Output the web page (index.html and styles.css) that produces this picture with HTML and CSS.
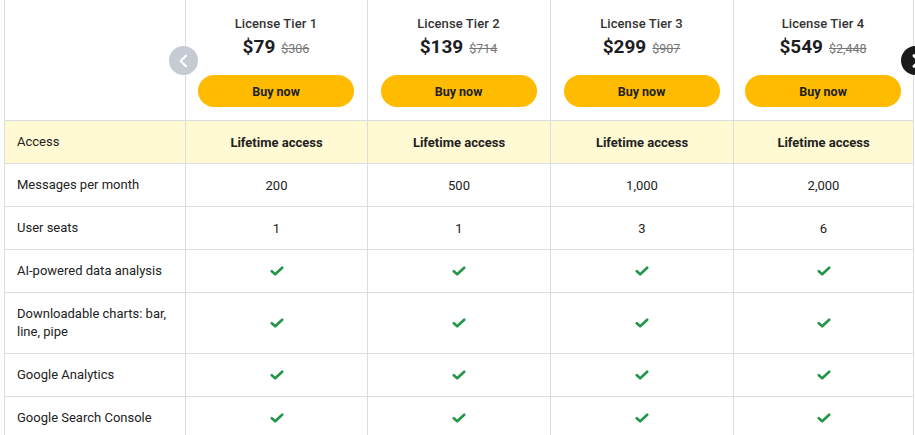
FILE: index.html
```html
<!DOCTYPE html>
<html>
<head>
<meta charset="utf-8">
<link rel="stylesheet" href="styles.css">
</head>
<body>
<div class="wrap">
  <div class="grid">
    <div class="cell head blank"></div>
    <div class="cell head">
      <div class="tier">License Tier 1</div>
      <div class="price"><span class="now">$79</span><span class="old">$306</span></div>
      <button class="buy">Buy now</button>
    </div>
    <div class="cell head">
      <div class="tier">License Tier 2</div>
      <div class="price"><span class="now">$139</span><span class="old">$714</span></div>
      <button class="buy">Buy now</button>
    </div>
    <div class="cell head">
      <div class="tier">License Tier 3</div>
      <div class="price"><span class="now">$299</span><span class="old">$907</span></div>
      <button class="buy">Buy now</button>
    </div>
    <div class="cell head">
      <div class="tier">License Tier 4</div>
      <div class="price"><span class="now">$549</span><span class="old">$2,448</span></div>
      <button class="buy">Buy now</button>
    </div>

    <div class="cell label hl">Access</div>
    <div class="cell val hl strong">Lifetime access</div>
    <div class="cell val hl strong">Lifetime access</div>
    <div class="cell val hl strong">Lifetime access</div>
    <div class="cell val hl strong">Lifetime access</div>

    <div class="cell label">Messages per month</div>
    <div class="cell val">200</div>
    <div class="cell val">500</div>
    <div class="cell val">1,000</div>
    <div class="cell val">2,000</div>

    <div class="cell label">User seats</div>
    <div class="cell val">1</div>
    <div class="cell val">1</div>
    <div class="cell val">3</div>
    <div class="cell val">6</div>

    <div class="cell label">AI-powered data analysis</div>
    <div class="cell val"><svg class="chk" viewBox="0 0 14 10"><path d="M1.8 5.2 L5.2 8.3 L12.2 1.7" /></svg></div>
    <div class="cell val"><svg class="chk" viewBox="0 0 14 10"><path d="M1.8 5.2 L5.2 8.3 L12.2 1.7" /></svg></div>
    <div class="cell val"><svg class="chk" viewBox="0 0 14 10"><path d="M1.8 5.2 L5.2 8.3 L12.2 1.7" /></svg></div>
    <div class="cell val"><svg class="chk" viewBox="0 0 14 10"><path d="M1.8 5.2 L5.2 8.3 L12.2 1.7" /></svg></div>

    <div class="cell label tall">Downloadable charts: bar, line, pipe</div>
    <div class="cell val tall"><svg class="chk" viewBox="0 0 14 10"><path d="M1.8 5.2 L5.2 8.3 L12.2 1.7" /></svg></div>
    <div class="cell val tall"><svg class="chk" viewBox="0 0 14 10"><path d="M1.8 5.2 L5.2 8.3 L12.2 1.7" /></svg></div>
    <div class="cell val tall"><svg class="chk" viewBox="0 0 14 10"><path d="M1.8 5.2 L5.2 8.3 L12.2 1.7" /></svg></div>
    <div class="cell val tall"><svg class="chk" viewBox="0 0 14 10"><path d="M1.8 5.2 L5.2 8.3 L12.2 1.7" /></svg></div>

    <div class="cell label">Google Analytics</div>
    <div class="cell val"><svg class="chk" viewBox="0 0 14 10"><path d="M1.8 5.2 L5.2 8.3 L12.2 1.7" /></svg></div>
    <div class="cell val"><svg class="chk" viewBox="0 0 14 10"><path d="M1.8 5.2 L5.2 8.3 L12.2 1.7" /></svg></div>
    <div class="cell val"><svg class="chk" viewBox="0 0 14 10"><path d="M1.8 5.2 L5.2 8.3 L12.2 1.7" /></svg></div>
    <div class="cell val"><svg class="chk" viewBox="0 0 14 10"><path d="M1.8 5.2 L5.2 8.3 L12.2 1.7" /></svg></div>

    <div class="cell label">Google Search Console</div>
    <div class="cell val"><svg class="chk" viewBox="0 0 14 10"><path d="M1.8 5.2 L5.2 8.3 L12.2 1.7" /></svg></div>
    <div class="cell val"><svg class="chk" viewBox="0 0 14 10"><path d="M1.8 5.2 L5.2 8.3 L12.2 1.7" /></svg></div>
    <div class="cell val"><svg class="chk" viewBox="0 0 14 10"><path d="M1.8 5.2 L5.2 8.3 L12.2 1.7" /></svg></div>
    <div class="cell val"><svg class="chk" viewBox="0 0 14 10"><path d="M1.8 5.2 L5.2 8.3 L12.2 1.7" /></svg></div>
  </div>
  <button class="nav prev" aria-label="Previous"><svg viewBox="0 0 12 12"><path d="M7.5 2 L3.5 6 L7.5 10" /></svg></button>
  <button class="nav next" aria-label="Next"><svg viewBox="0 0 12 12"><path d="M4.5 2 L8.5 6 L4.5 10" /></svg></button>
</div>
</body>
</html>
```

FILE: styles.css
```css
html, body {
  margin: 0;
  padding: 0;
  background: #fff;
  overflow: hidden;
}
body {
  font-family: Roboto, "Liberation Sans", Arial, sans-serif;
  color: #222;
  font-size: 13px;
}
.wrap {
  position: relative;
  width: 915px;
  height: 435px;
  overflow: hidden;
  padding-left: 4px;
  box-sizing: border-box;
}
.grid {
  display: grid;
  grid-template-columns: 181px 182px 183px 183px 180px;
  grid-template-rows: 121px 43px 43px 43px 43px 61px 43px 43px;
  border-left: 1px solid #dcdde0;
  width: 910px;
}
.cell {
  border-right: 1px solid #dcdde0;
  border-bottom: 1px solid #dcdde0;
  box-sizing: border-box;
  display: flex;
  align-items: center;
}
.head {
  flex-direction: column;
  align-items: center;
  justify-content: flex-start;
  padding: 16px 13px 0 12px;
}
.tier {
  font-size: 13px;
  font-weight: 500;
  color: #333;
  line-height: 16px;
  letter-spacing: 0.1px;
}
.price {
  margin-top: 4px;
  display: flex;
  align-items: baseline;
  gap: 6px;
  line-height: 22px;
}
.now {
  font-size: 19px;
  font-weight: 700;
  color: #1d1d1f;
}
.old {
  font-size: 12.5px;
  color: #777;
  text-decoration: line-through;
}
.buy {
  margin-top: 15px;
  width: 156px;
  height: 32px;
  border: none;
  border-radius: 16px;
  background: #ffbb00;
  font-family: inherit;
  font-size: 12.5px;
  font-weight: 700;
  color: #222;
  padding: 0;
}
.label {
  padding: 0 12px;
  line-height: 18px;
}
.val {
  justify-content: center;
}
.hl {
  background: #fffad3;
}
.strong {
  font-weight: 700;
}
.chk {
  width: 14px;
  height: 10px;
}
.chk path {
  fill: none;
  stroke: #23964a;
  stroke-width: 2.6;
  stroke-linecap: round;
  stroke-linejoin: round;
}
.nav {
  position: absolute;
  top: 46px;
  width: 29px;
  height: 29px;
  border-radius: 50%;
  border: none;
  padding: 0;
  display: flex;
  align-items: center;
  justify-content: center;
}
.nav svg {
  width: 16px;
  height: 16px;
}
.nav path {
  fill: none;
  stroke: #fff;
  stroke-width: 1.6;
  stroke-linecap: round;
  stroke-linejoin: round;
}
.prev {
  left: 169px;
  background: #c6cad3;
}
.next {
  left: 901px;
  background: #1a1a1a;
}
.next path {
  stroke-width: 2.2;
}
```
